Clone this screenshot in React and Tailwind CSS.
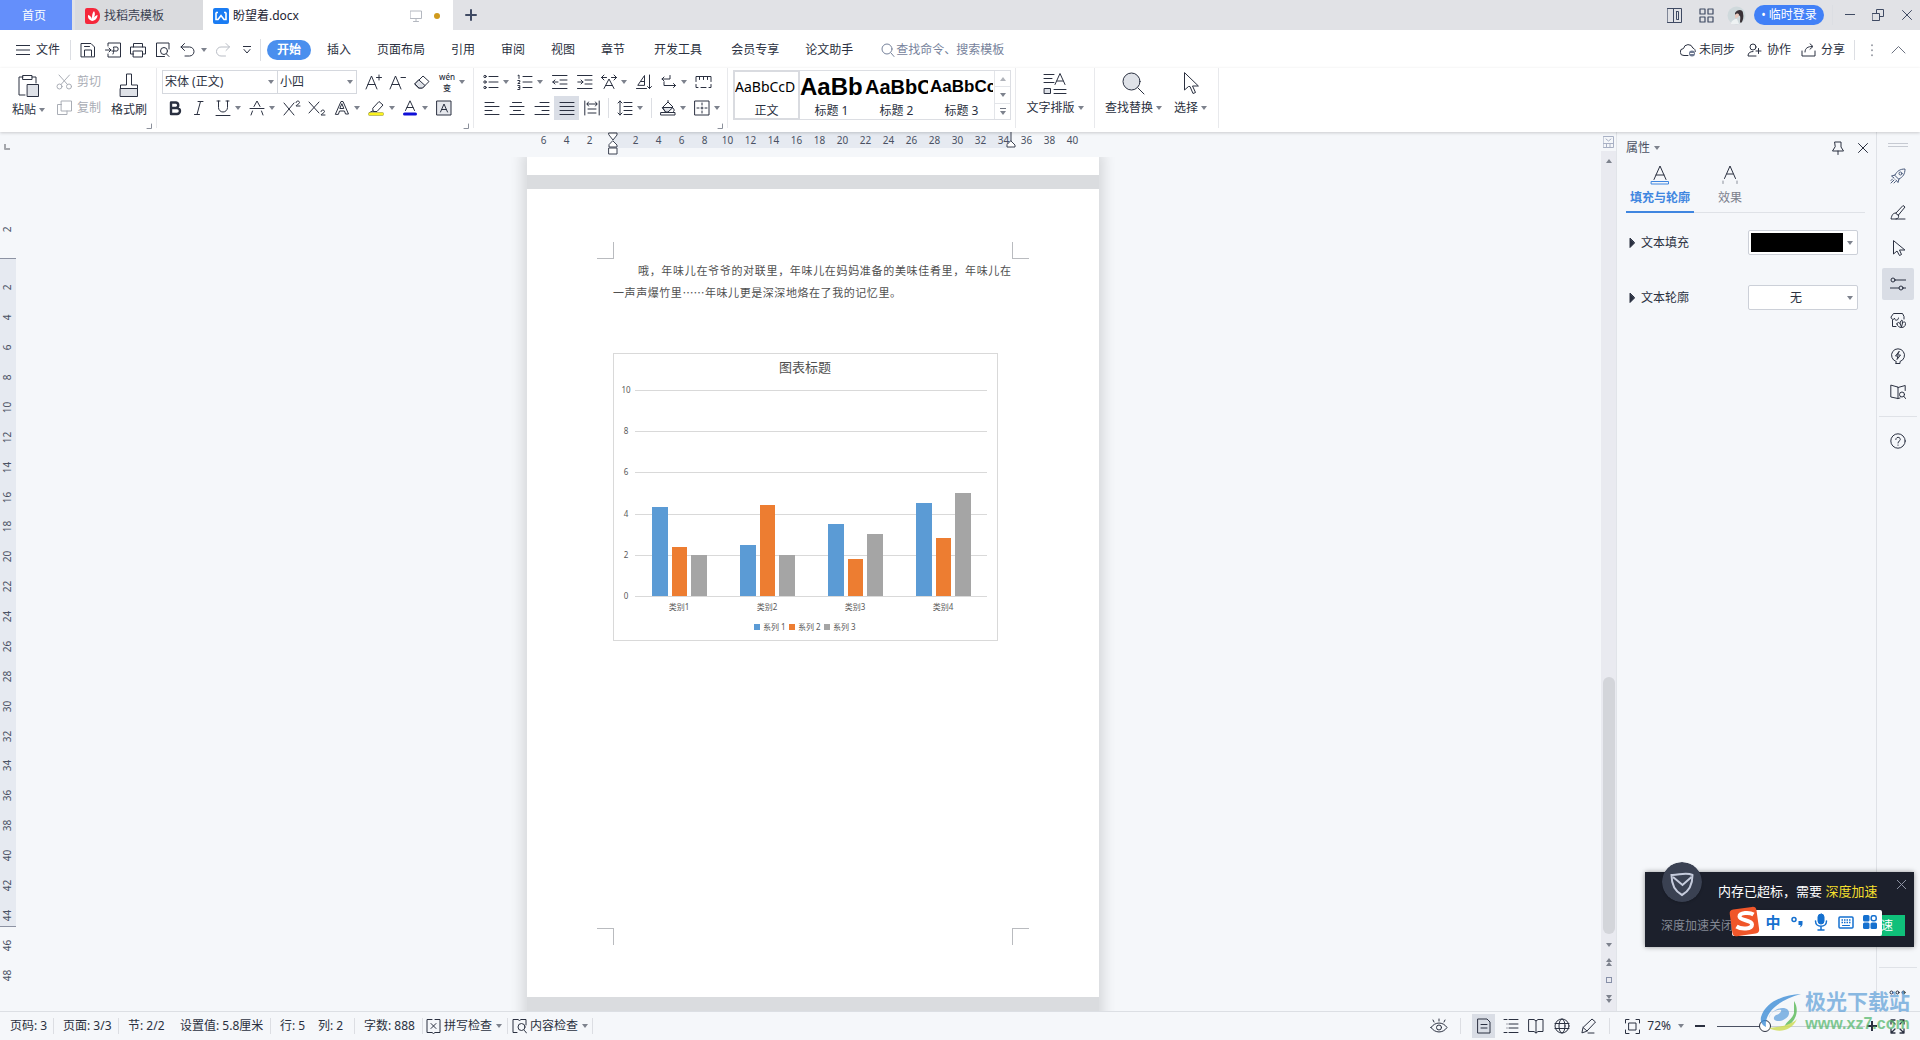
import React from "react";

const FONT = "font-['Noto_Sans','Noto_Sans_CJK_SC',sans-serif]";

function Ic({ children, w = 16, h = 16, className = "", sw = 1 }) {
  return (
    <svg width={w} height={h} viewBox={`0 0 ${w} ${h}`} fill="none" stroke="currentColor" strokeWidth={sw} strokeLinejoin="round" strokeLinecap="round" aria-hidden="true" className={`shrink-0 ${className}`}>
      {children}
    </svg>
  );
}

function Caret({ className = "" }) {
  return (
    <svg width="6" height="4" viewBox="0 0 6 4" aria-hidden="true" className={`shrink-0 text-[#7d828d] ${className}`}>
      <path d="M0 0h6L3 4z" fill="currentColor" />
    </svg>
  );
}

function Bar({ className = "" }) {
  return <span className={`w-px shrink-0 bg-[#dcdee3] ${className}`} />;
}

/* ---------- title bar ---------- */

function TitleBar() {
  return (
    <header className="flex h-[30px] shrink-0 bg-[#e1e2e6] text-xs">
      <button className="w-[72px] bg-[#648ffb] pt-px pr-1 text-white">首页</button>
      <button className="ml-[3px] flex w-32 items-center gap-1 bg-[#dadbde] pt-px pl-[10px] text-[#3b4252]">
        <svg width="15" height="16" viewBox="0 0 15 16" aria-hidden="true">
          <path d="M2 0h6c4 0 7 3.500 7 8s-3 8-7 8H2a2 2 0 0 1-2-2V2a2 2 0 0 1 2-2z" fill="#f5273b" />
          <path d="M7 13C4 12 2.500 10 3 7c2 .5 3.500 2 4 4 0-3 0-6 2-8 1.500 2 1 5-.5 7 1-1.500 2-2.500 4-3 0 3-2 5.500-5.500 6z" fill="#fff" />
        </svg>
        <span>找稻壳模板</span>
      </button>
      <div className="flex w-[250px] items-center bg-white pt-px pr-[13px] pl-[10px] text-[#1d2433]">
        <svg width="16" height="16" viewBox="0 0 16 16" aria-hidden="true">
          <rect width="16" height="16" rx="2" fill="#1a7cf3" />
          <path d="M3 4.500v7h2L8 7.500l3 4h2v-7M3 4.500h2M11 4.500h2" fill="none" stroke="#fff" strokeWidth="1.600" />
        </svg>
        <span className="ml-1">盼望着.docx</span>
        <Ic w={12} h={12} className="ml-auto text-[#b4b8c0]">
          <path d="M.5 1h11v7.500H.5zM6 8.500v3M3.500 11.500h5" />
        </Ic>
        <span className="ml-[12px] size-[6px] rounded-full bg-[#d09a1c]" />
      </div>
      <button aria-label="新建标签" className="ml-3 text-[#3f4a63]">
        <Ic w={12} h={12} sw={2}><path d="M6 1v10M1 6h10" /></Ic>
      </button>
      <div className="ml-auto flex items-center pr-2 text-[#3f4a63]">
        <button aria-label="分屏">
          <Ic w={15} h={15}><path d="M.5.5h14v14H.5zM6.500.5v14M9.500 3.500v8h2M9.500 3.500h2v8" /></Ic>
        </button>
        <button aria-label="应用" className="ml-[17px]">
          <Ic w={15} h={15} sw={1.2}><path d="M1 1h5v5H1zM9 1h5v5H9zM1 9h5v5H1zM9 9h5v5H9z" /></Ic>
        </button>
        <svg width="19" height="19" viewBox="0 0 19 19" role="img" aria-label="头像" className="ml-[13px]">
          <circle cx="9.500" cy="9.500" r="9" fill="#cfd9dc" />
          <path d="M8 7c2-4 8-4 8 0 1 4 0 8-2 10-2-1 0-4-1-7-1-1-3 0-5 1z" fill="#3a3136" />
          <path d="M8 9c1-2 4-2 4 0s-3 4-4 3z" fill="#e8c9bd" />
          <path d="M4 18c0-3 3-5 6-5l2 5z" fill="#eef2f3" />
        </svg>
        <button className="ml-[8px] h-5 w-[70px] rounded-full bg-[#4180f7] text-xs leading-5 text-white">• 临时登录</button>
        <Bar className="ml-2 h-5 bg-[#c9ccd2]" />
        <button aria-label="最小化" className="ml-3"><Ic w={10} h={10}><path d="M0 4.500h10" /></Ic></button>
        <button aria-label="还原" className="ml-[17px]"><Ic w={12} h={12}><path d="M.5 4.500h7v7h-7zM4.500 4.500v-4h7v7h-4" /></Ic></button>
        <button aria-label="关闭" className="ml-[18px]"><Ic w={10} h={10}><path d="M.5.5l9 9M9.500.5l-9 9" /></Ic></button>
      </div>
    </header>
  );
}

/* ---------- menu row ---------- */

const MENUS = ["插入", "页面布局", "引用", "审阅", "视图", "章节", "开发工具", "会员专享", "论文助手"];

function MenuRow() {
  return (
    <nav className="flex h-[38px] shrink-0 items-center bg-white pt-0.5 text-xs text-[#2a3040]">
      <button className="ml-4 flex items-center gap-[6px]">
        <Ic w={14} h={10}><path d="M0 .5h14M0 5h14M0 9.500h14" /></Ic>文件
      </button>
      <Bar className="ml-[10px] h-5" />
      <button aria-label="保存" className="ml-[9px]">
        <Ic><path d="M1 14.500V1.500h10l3.500 3.500v9.500zM4.500 14V8h7v6M4.500 4.500h5" /></Ic>
      </button>
      <button aria-label="输出为PDF" className="ml-[9px]">
        <Ic><path d="M3 4V1h12.500v14H3v-3M.5 8H6M4 6l2 2-2 2M8 12c1-2 1-5 .5-7h3.500c1.500 0 1.500 4 0 4H7" /></Ic>
      </button>
      <button aria-label="打印" className="ml-[9px]">
        <Ic><path d="M3.500 5V1.500h9V5M3.500 12H.5V5h15v7h-3M3.500 9h9v6h-9z" /></Ic>
      </button>
      <button aria-label="打印预览" className="ml-[9px]">
        <Ic><path d="M4 14.500H1.500V1H14v6M14 14.500l-2.500-2.500M1.500 14.500h8" /><circle cx="9" cy="9" r="3.500" /></Ic>
      </button>
      <button aria-label="撤销" className="ml-[9px] flex items-center gap-[6px]">
        <Ic w={15}><path d="M4.500 1.500L1 5l3.500 3.500M1 5h8.500a4.500 4.500 0 0 1 0 9H5" /></Ic><Caret />
      </button>
      <button aria-label="恢复" className="ml-[8px] text-[#b9bdc5]">
        <Ic><path d="M11 1.500L14.500 5 11 8.500M14.500 5H6a4.500 4.500 0 0 0 0 9h4.500" /></Ic>
      </button>
      <button aria-label="自定义" className="ml-[12px]">
        <Ic w={8} h={8}><path d="M0 .5h8M1 3.500L4 7l3-3.500" /></Ic>
      </button>
      <Bar className="ml-[9px] h-[22px]" />
      <button className="ml-[6px] h-5 w-11 rounded-full bg-[#4a8fee] font-bold leading-5 text-white">开始</button>
      <div className="ml-[3px] flex">
        {MENUS.map((m) => (
          <button key={m} className={m === "开发工具" ? "px-4" : "px-[13px]"}>{m}</button>
        ))}
      </div>
      <label className="ml-[15px] flex items-center gap-px text-[#76829b]">
        <Ic w={14} h={14}><circle cx="6" cy="6" r="5" /><path d="M10 10l3 3.500" /></Ic>
        <input aria-label="搜索" placeholder="查找命令、搜索模板" className="w-32 bg-transparent outline-none placeholder:text-[#76829b]" />
      </label>
      <div className="ml-auto flex items-center pr-[14px]">
        <button className="flex items-center gap-[3px]">
          <Ic w={16} h={14}><path d="M8 12.500H4a3.500 3.500 0 0 1-.5-7 4.800 4.800 0 0 1 9.300-.5c2 .8 2.500 2 2.500 3.500" /><circle cx="12" cy="10.500" r="3" fill="#6f7a92" stroke="none" /><path d="M10.500 10.500h3" stroke="#fff" /></Ic>
          未同步
        </button>
        <button className="ml-3 flex items-center gap-[5px]">
          <Ic w={15} h={14}><circle cx="6" cy="4" r="3" /><path d="M9 13H1c0-3 2-4.500 5-4.500M11.500 5.500v5M9 8h5" /></Ic>
          协作
        </button>
        <button className="ml-[10px] flex items-center gap-[5px]">
          <Ic w={15} h={14}><path d="M1 8v5h13V8M4 9c0-4 3-5.500 7-5.500M9 .8l3 2.700-3 2.700" /></Ic>
          分享
        </button>
        <Bar className="ml-[9px] h-5" />
        <button aria-label="更多" className="ml-[15px] text-[#7d828d]"><Ic w={4} h={14}><path d="M2 2v.5M2 7v.5M2 12v.5" strokeWidth="1.500" /></Ic></button>
        <button aria-label="收起功能区" className="ml-[17px] text-[#6b7180]"><Ic w={15} h={10}><path d="M1 8l6.500-6.500L14 8" /></Ic></button>
      </div>
    </nav>
  );
}

/* ---------- ribbon ---------- */

function Cell({ label, className = "w-6", children }) {
  return (
    <button aria-label={label} className={`flex h-6 shrink-0 items-center justify-center ${className}`}>{children}</button>
  );
}

function Split({ label, children }) {
  return (
    <button aria-label={label} className="flex h-6 w-[34px] shrink-0 items-center gap-1 px-1">
      {children}
      <Caret />
    </button>
  );
}

function Group({ corner, className = "", children }) {
  return (
    <div className={`flex flex-col gap-0.5 pt-0.5 ${className}`}>
      {children}
      {corner && (
        <button aria-label="更多设置" className="mt-px mr-[4px] self-end text-[#8b909b]">
          <Ic w={6} h={6}><path d="M5.500 1v4.500H1" /></Ic>
        </button>
      )}
    </div>
  );
}

function Sep() {
  return <Bar className="h-[60px] bg-[#e8e9ec]" />;
}

const lines = (a) => a.map(([x1, y, x2]) => `M${x1} ${y}H${x2}`).join("");

function Combo({ label, value, className }) {
  return (
    <span className={`relative flex h-6 items-center ${className}`}>
      <select aria-label={label} className="h-full w-full appearance-none bg-transparent pl-[2px] text-xs outline-none">
        <option>{value}</option>
      </select>
      <Caret className="pointer-events-none absolute right-[3px]" />
    </span>
  );
}

function BigButton({ label, caret = true, icon, className = "" }) {
  return (
    <button className={`flex flex-col items-center gap-[3px] pt-[3px] ${className}`}>
      <span className="flex h-[25px] items-center">{icon}</span>
      <span className="flex items-center gap-[3px] leading-[18px]">{label}{caret && <Caret />}</span>
    </button>
  );
}

const STYLES = [
  { name: "正文", cls: "text-sm", sample: "AaBbCcD" },
  { name: "标题 1", cls: "text-2xl font-bold font-['Liberation_Sans',sans-serif]", sample: "AaBb" },
  { name: "标题 2", cls: "text-xl font-bold font-['Liberation_Sans',sans-serif]", sample: "AaBbC" },
  { name: "标题 3", cls: "text-[17px] font-bold font-['Liberation_Sans',sans-serif]", sample: "AaBbCc" },
];

function Ribbon() {
  return (
    <div className="z-10 flex h-16 shrink-0 bg-white text-xs text-[#2a3040] shadow-[0_1px_3px_rgba(0,0,0,0.18)]">
      <Group corner className="w-[156px]">
        <div className="flex h-[50px]">
          <BigButton label="粘贴" className="ml-[12px] w-[33px]" icon={
            <Ic w={22} h={24}><path d="M5 3H1v18h6M14 3h4v6" /><path d="M5 1.500h9v4H5z" /><path d="M9.500 10.500h11v12h-11z" fill="#dfe2e8" /></Ic>
          } />
          <div className="ml-[11px] text-[#a9adb5]">
            <button className="flex h-6 items-center gap-1"><Ic w={17}><circle cx="3.500" cy="12.500" r="2.500" /><circle cx="13" cy="12.500" r="2.500" /><path d="M5 10.500L13.500 1M11.500 10.500L3 1" /></Ic>剪切</button>
            <button className="mt-0.5 flex h-6 items-center gap-1"><Ic w={17}><path d="M5.500 1h10v10h-10z" /><path d="M5.500 4.500H1.500v10h9.500V11" /></Ic>复制</button>
          </div>
          <BigButton label="格式刷" caret={false} className="ml-[10px]" icon={
            <Ic w={20} h={25}><path d="M1.500 15.500h17v8h-17z" fill="#dfe2e8" /><path d="M1.500 15.500V12H7.500V1h5v11h6v3.500" /></Ic>
          } />
        </div>
      </Group>
      <Sep />
      <Group corner className="w-[316px] pl-[5px]">
        <div className="flex">
          <div className="flex w-[195px] border border-[#d5d8de]">
            <Combo label="字体" value="宋体 (正文)" className="-my-px w-[115px] border-r border-[#d5d8de]" />
            <Combo label="字号" value="小四" className="-my-px flex-1" />
          </div>
          <div className="ml-1 flex">
            <Cell label="增大字号"><Ic w={17}><path d="M1 15L6.500 2 12 15M3 10.500h7M14 1v5M11.500 3.500h5" /></Ic></Cell>
            <Cell label="减小字号"><Ic w={17}><path d="M1 15L6.500 2 12 15M3 10.500h7M12 3.500h4.500" /></Ic></Cell>
            <Cell label="清除格式" className="w-[26px]"><Ic><path d="M1 10l8-8 6 5.500-6.500 6.500H5z" /><path d="M5 6l6 5.500-2.500 2.500H5L1 10z" fill="#dfe2e8" /></Ic></Cell>
            <Split label="拼音指南">
              <span className="flex w-4 flex-col items-center text-[8px] font-medium leading-[11px]"><span>wén</span><span>变</span></span>
            </Split>
          </div>
        </div>
        <div className="flex">
          <Cell label="加粗" className="w-[25px]"><Ic sw={2.4}><path d="M4 2.500h5a2.800 2.800 0 0 1 0 5.500H4zM4 8h6a2.900 2.900 0 0 1 0 6H4z" /></Ic></Cell>
          <Cell label="倾斜"><Ic><path d="M7 1.500h5M3.500 14.500h5M9.500 1.500l-3.500 13" /></Ic></Cell>
          <Split label="下划线"><Ic><path d="M3.500 1v6.500a4.500 4.500 0 0 0 9 0V1M1 15.500h14M2 1h3M11 1h3" /></Ic></Split>
          <Split label="删除线"><Ic><path d="M1 8.500h14M5 6.500L8 1l3 5.500M3.500 11L2 15M12.500 11l1.500 4" /></Ic></Split>
          <Cell label="上标" className="w-[25px]"><Ic w={18}><path d="M1 3l10 12M11 3L1 15M13 2.500c0-2 3.500-2 3.500 0C16.500 4 13 5 13 6h4" /></Ic></Cell>
          <Cell label="下标" className="w-[26px]"><Ic w={18}><path d="M1 2l10 11M11 2L1 13M13 11.500c0-2 3.500-2 3.500 0 0 1.500-3.500 2.500-3.500 3.500h4" /></Ic></Cell>
          <Split label="文字效果"><Ic><path d="M1.500 14L7 1.500h2L14.500 14h-3l-1-3h-5l-1 3zM6.200 8.500h3.600L8 4z" /></Ic></Split>
          <Split label="突出显示"><Ic w={17}><path d="M5 8l6-6.500 4 3.500-6 6.500H5.500zM5 11L2.500 12" /><rect x=".5" y="12.500" width="15" height="3" rx="1" fill="#fbf21d" stroke="#8a8a3a" strokeWidth=".5" /></Ic></Split>
          <Split label="字体颜色"><Ic><path d="M3.500 10.500L8 .8l4.500 9.700M5 7.500h6" /><rect x="1" y="12.500" width="14" height="3" rx="1.500" fill="#1010d8" stroke="none" /></Ic></Split>
          <Cell label="字符底纹"><Ic><path d="M1 1h14v14H1z" fill="#e6e8ed" /><path d="M4.500 12L8 4l3.500 8M5.500 9.500h5" /></Ic></Cell>
        </div>
      </Group>
      <Sep />
      <Group corner className="w-[253px] pl-[5px]">
        <div className="flex">
          <Split label="项目符号"><Ic><path d={lines([[6, 2.5, 15], [6, 8, 15], [6, 13.5, 15]])} /><circle cx="2" cy="2.500" r="1.200" /><circle cx="2" cy="8" r="1.200" /><circle cx="2" cy="13.500" r="1.200" /></Ic></Split>
          <Split label="编号"><Ic><path d={lines([[6, 2.5, 15], [6, 8, 15], [6, 13.5, 15]])} /><path d="M1 1.500l1-.5v3.500M.8 6.500h2v1.500l-2 1.500h2M.8 11.500h2v4h-2M1.500 13.500h1" /></Ic></Split>
          <Cell label="减少缩进" className="w-[25px]"><Ic><path d={lines([[0.5, 1.5, 15], [8, 6, 15], [8, 10, 15], [0.5, 14.5, 15]])} /><path d="M6 8H.8M3 6L.8 8 3 10" /></Ic></Cell>
          <Cell label="增加缩进" className="w-[25px]"><Ic><path d={lines([[0.5, 1.5, 15], [8, 6, 15], [8, 10, 15], [0.5, 14.5, 15]])} /><path d="M.8 8H6M4 6l2 2-2 2" /></Ic></Cell>
          <Split label="中文版式"><Ic><path d="M3 14.500L8 5l5 9.500M4.500 11.500h7M.5 3.500h5M3 1L.5 3.500 3 6M15.500 3.500h-5M13 1l2.500 2.500L13 6" /></Ic></Split>
          <Cell label="排序" className="w-[26px]"><Ic><path d="M.5 14.500h10M2 11L8.500 1.500V11zM5 7.500h3.500M13.500 1v13.500M11.500 12.500l2 2 2-2" /></Ic></Cell>
          <Split label="换行"><Ic><path d="M1 5h8V1.500M3 3L1 5l2 2M3 8v3.500h11.500M12.500 9.500l2 2-2 2" /></Ic></Split>
          <Cell label="制表位"><Ic w={17}><path d="M1 7.500v-5h15v5M4.500 2.500v3M8.500 2.500v3M12.500 2.500v3M1 10.500v3h2M6 13.500h5M14 13.500h2v-3" /></Ic></Cell>
        </div>
        <div className="flex items-center">
          <Cell label="左对齐" className="w-[25px]"><Ic><path d={lines([[1, 2.5, 10], [1, 6.5, 15], [1, 10.5, 8], [1, 14.5, 15]])} /></Ic></Cell>
          <Cell label="居中" className="w-[25px]"><Ic><path d={lines([[3.5, 2.5, 12.5], [1, 6.5, 15], [4.5, 10.5, 11.5], [1, 14.5, 15]])} /></Ic></Cell>
          <Cell label="右对齐" className="w-[25px]"><Ic><path d={lines([[6, 2.5, 15], [1, 6.5, 15], [8, 10.5, 15], [1, 14.5, 15]])} /></Ic></Cell>
          <Cell label="两端对齐" className="w-[25px] bg-[#dadee6]"><Ic><path d={lines([[1, 2.5, 15], [1, 6.5, 15], [1, 10.5, 15], [1, 14.5, 15]])} /></Ic></Cell>
          <Cell label="分散对齐" className="w-[25px]"><Ic><path d="M.8 1v14M15.200 1v14M3 4h10M4.500 2L3 4l1.500 2M11.500 2L13 4l-1.500 2M4 9h8M4 13h8" /></Ic></Cell>
          <Bar className="mx-1 h-5" />
          <Split label="行距"><Ic><path d={lines([[7, 2.5, 15], [7, 6.5, 15], [7, 10.5, 15], [7, 14.5, 15]])} /><path d="M3 1v14M1 3l2-2 2 2M1 13l2 2 2-2" /></Ic></Split>
          <Bar className="mx-1 h-5" />
          <Split label="底纹颜色"><Ic><path d="M2.500 7.500L8 2l5 5-5 5H6z" /><path d="M3 7.500h10l-5 4.500H6zM8 2V.5M13.500 8.500c1 1.500 1 2.500 0 3" fill="#dfe2e8" /><path d="M1 12.500h14v2.500H1z" fill="#fff" /></Ic></Split>
          <Split label="边框"><Ic><path d="M1 1h14v14H1z" /><path d="M8 3v10M3 8h10" strokeDasharray="2 2" /></Ic></Split>
        </div>
      </Group>
      <Sep />
      <div className="mt-[2px] ml-[5px] flex h-[50px] w-[278px] border border-[#dcdee3]">
        {STYLES.map((s, i) => (
          <button key={s.name} className={`flex w-[65px] shrink-0 flex-col items-center ${i === 0 ? "outline-2 -outline-offset-1 outline-[#d9dbe0]" : ""}`}>
            <span className={`flex h-8 w-[63px] items-center overflow-hidden whitespace-nowrap text-black ${s.cls}`}>{s.sample}</span>
            <span className="leading-4">{s.name}</span>
          </button>
        ))}
        <span className="flex flex-1 flex-col divide-y divide-[#e3e5e9] border-l border-[#e3e5e9]">
          <button aria-label="上一行" className="flex flex-1 items-center justify-center"><Caret className="rotate-180 opacity-60" /></button>
          <button aria-label="下一行" className="flex flex-1 items-center justify-center"><Caret /></button>
          <button aria-label="更多样式" className="flex flex-1 flex-col items-center justify-center gap-0.5"><span className="h-px w-[6px] bg-[#6f7480]" /><Caret /></button>
        </span>
      </div>
      <Bar className="ml-[4px] h-[60px] bg-[#e8e9ec]" />
      <BigButton label="文字排版" className="w-[78px]" icon={
        <Ic w={24} h={22}><path d="M1 1.500h10M1 5.500h8M1 9.500h10M12 11.500L17 .5l5 11M14 8h6M11 16.500h12M11 20.500h12" /><path d="M1.500 15.500h6v5h-6z" fill="#dfe2e8" /></Ic>
      } />
      <Sep />
      <BigButton label="查找替换" className="ml-[10px]" icon={
        <Ic w={23} h={23}><circle cx="9.500" cy="9.500" r="8.500" fill="#dfe2e8" /><path d="M16 16l6 6" /></Ic>
      } />
      <BigButton label="选择" className="ml-3 mr-[11px]" icon={
        <Ic w={17} h={23}><path d="M2.500 1v17l4-3.500h1.500l3 7 2.500-1-3-6.500h5.500z" /></Ic>
      } />
      <Sep />
    </div>
  );
}

/* ---------- rulers ---------- */

const H_MARKS = [6, 4, 2, "", 2, 4, 6, 8, 10, 12, 14, 16, 18, 20, 22, 24, 26, 28, 30, 32, 34, 36, 38, 40];
const V_MARKS = Array.from({ length: 24 }, (_, i) => (i + 1) * 2);

function VRuler() {
  return (
    <div className="relative flex w-4 shrink-0 flex-col items-center text-[10px] leading-[15px] text-[#4a5163]">
      <div className="absolute top-[126px] left-0 h-[669px] w-4 border-y border-[#8d93a3] bg-[#e6eaf1]" />
      <Ic w={6} h={6} sw={2} className="absolute top-[12px] left-1 text-[#a4a6ab]"><path d="M1 0v5h5" /></Ic>
      <div className="relative mt-[90px] -rotate-90">2</div>
      <div className="relative mt-[36px] flex h-[717px] flex-col">
        {V_MARKS.map((n) => (
          <div key={n} className="flex flex-1 items-center justify-center"><span className="-rotate-90">{n}</span></div>
        ))}
      </div>
    </div>
  );
}

function HRuler() {
  return (
    <div className="flex h-[25px] shrink-0 justify-center pl-[9px]">
      <div className="relative w-[572px] shrink-0 pl-[5px] text-[10px] leading-4 text-[#4a5163]">
        <div className="absolute top-0 left-[86px] h-4 w-[398px] bg-[#e6eaf1]" />
        <div className="relative flex">
          {H_MARKS.map((n, i) => <span key={i} className="w-[23px] shrink-0 text-center">{n}</span>)}
        </div>
        <Ic w={10} h={23} className="absolute top-0 left-[81px] text-[#3d4352]">
          <path d="M1 1h8v2L5 8 1 3zM5 9l4 4v2H1v-2zM1 16h8v6H1z" fill="#fff" />
        </Ic>
        <Ic w={10} h={16} className="absolute top-0 left-[479px] text-[#3d4352]">
          <path d="M5 0v9" /><path d="M5 9l4 4v2H1v-2z" fill="#fff" />
        </Ic>
      </div>
    </div>
  );
}

/* ---------- document ---------- */

const SERIES = [
  { name: "系列 1", color: "#5b9bd5", values: [4.3, 2.5, 3.5, 4.5] },
  { name: "系列 2", color: "#ed7d31", values: [2.4, 4.4, 1.8, 2.8] },
  { name: "系列 3", color: "#a5a5a5", values: [2, 2, 3, 5] },
];

function Chart() {
  const y = (v) => Math.round(243 - v * 20.6);
  return (
    <svg width="385" height="288" viewBox="0 0 385 288" role="img" aria-label="图表标题" className={`mt-[50px] block ${FONT}`}>
      <rect x=".5" y=".5" width="384" height="287" fill="#fff" stroke="#d9d9d9" />
      <text x="192" y="19" fontSize="13" textAnchor="middle" fill="#505050">图表标题</text>
      {[0, 2, 4, 6, 8, 10].map((v) => (
        <g key={v}>
          <path d={`M22 ${y(v) + 0.5}H374`} stroke="#d9d9d9" />
          <text x="13" y={y(v) + 3} fontSize="8" textAnchor="middle" fill="#595959">{v}</text>
        </g>
      ))}
      {SERIES.map((s, si) =>
        s.values.map((v, i) => (
          <rect key={`${si}-${i}`} x={39 + i * 88 + si * 20 - (si === 2 ? 1 : 0)} y={y(v)} width={si === 1 ? 15 : 16} height={243 - y(v)} fill={s.color} />
        ))
      )}
      {[1, 2, 3, 4].map((n) => (
        <text key={n} x={66 + (n - 1) * 88} y="257" fontSize="8" textAnchor="middle" fill="#595959">类别{n}</text>
      ))}
      {SERIES.map((s, i) => (
        <g key={s.name}>
          <rect x={141 + i * 35} y="271" width="6" height="6" fill={s.color} />
          <text x={150 + i * 35} y="277" fontSize="8" fill="#595959">{s.name}</text>
        </g>
      ))}
    </svg>
  );
}

function Pages() {
  return (
    <div className="flex min-h-0 flex-1 justify-center overflow-hidden pl-[9px]">
      <div className="flex w-[572px] shrink-0 flex-col self-start bg-[#dadcdf] shadow-[0_0_12px_5px_rgba(0,0,0,0.12)]">
        <div className="h-[18px] bg-white" />
        <article className="mt-[14px] mb-[30px] flex h-[808px] flex-col bg-white pt-[53px] pb-[52px]">
          <div className="flex justify-between px-[70px]">
            <span className="size-[17px] border-r border-b border-[#b9bbbf]" />
            <span className="size-[17px] border-b border-l border-[#b9bbbf]" />
          </div>
          <div className="px-[86px]">
            <p lang="zh-CN" className="w-[398px] font-['Noto_Sans_CJK_SC',sans-serif] text-[11px] leading-[22px] text-[#505050] [text-align-last:justify]">
              <span className="block whitespace-nowrap pl-[25px]">哦，年味儿在爷爷的对联里，年味儿在妈妈准备的美味佳肴里，年味儿在</span>
              <span className="block w-[288px] whitespace-nowrap">一声声爆竹里……年味儿更是深深地烙在了我的记忆里。</span>
            </p>
            <Chart />
          </div>
          <div className="mt-auto flex justify-between px-[70px]">
            <span className="size-[17px] border-t border-r border-[#b9bbbf]" />
            <span className="size-[17px] border-t border-l border-[#b9bbbf]" />
          </div>
        </article>
      </div>
    </div>
  );
}

function ScrollBar() {
  return (
    <div className="flex w-[15px] shrink-0 flex-col items-center text-[#8790a8]">
      <button aria-label="标尺" className="mt-1 text-[#a8b0c4]">
        <Ic w={11} h={12}><path d="M.5.5h10v11H.5zM.5 7.500h10M3.500 8v3M7 8v3M3 3l2.500 2L8 3" /></Ic>
      </button>
      <div className="mt-[3px] flex w-full flex-1 flex-col items-center bg-[#e9eaf0]">
        <Caret className="mt-2 rotate-180" />
        <div className="mt-auto h-[257px] w-[12px] rounded-full bg-[#d3d5da]" />
        <button aria-label="向下" className="mt-[9px]"><Caret className="block" /></button>
        <button aria-label="上一页" className="mt-[11px]"><Caret className="block rotate-180" /><Caret className="block rotate-180" /></button>
        <button aria-label="选择浏览对象" className="mt-[11px] size-[6px] border border-[#8790a8]" />
        <button aria-label="下一页" className="mt-[12px] mb-[8px]"><Caret className="block" /><Caret className="block" /></button>
      </div>
    </div>
  );
}

/* ---------- properties panel ---------- */

function Panel() {
  return (
    <aside className="flex w-[260px] shrink-0 flex-col border-l border-[#e1e4e9] pr-[8px] pl-[9px] text-xs text-[#2a3040]">
      <div className="mt-[7px] flex h-[18px] items-center">
        <button className="flex items-center gap-1 text-[#4a5163]">属性<Caret /></button>
        <button aria-label="固定" className="mr-[13px] ml-auto"><Ic w={14} h={14}><path d="M4 1h6v5l2.500 4h-11L4 6zM7 10v3.500" /></Ic></button>
        <button aria-label="关闭面板"><Ic w={10} h={10}><path d="M.5.5l9 9M9.500.5l-9 9" /></Ic></button>
      </div>
      <div className="mt-[8px] mr-[3px] flex border-b border-[#dfe2e7]">
        <button className="-mb-px flex h-[48px] w-[68px] flex-col items-center gap-[4px] border-b-2 border-[#3f86e0] font-bold text-[#3f86e0]">
          <Ic w={20} h={20} className="text-[#2a3040]"><path d="M4 14.500L10 1l6 13.500M6 10h8" /><path d="M1.500 16.500h17v2.500h-17z" stroke="#3f86e0" /></Ic>
          <span className="leading-[18px] whitespace-nowrap">填充与轮廓</span>
        </button>
        <button className="ml-3 flex w-12 flex-col items-center gap-[4px] text-[#7b808c]">
          <Ic w={20} h={20} className="text-[#2a3040]"><path d="M4.500 13.500L10 1l5.500 12.500M7 9h6" /><path d="M3 16v2.500M17 16v2.500" stroke="#8b909b" /></Ic>
          <span className="leading-[18px]">效果</span>
        </button>
      </div>
      <div className="mt-[17px] flex items-center justify-between">
        <button className="flex items-center gap-[6px] pl-[3px]"><Ic w={6} h={10}><path d="M1 .5v9L5.500 5z" fill="currentColor" /></Ic>文本填充</button>
        <button aria-label="文本填充颜色" className="mr-[10px] flex h-[25px] w-[110px] items-center justify-between rounded-[2px] border border-[#ccd0d8] bg-white pr-1 pl-[2px]">
          <span className="h-[19px] w-[92px] bg-black" /><Caret />
        </button>
      </div>
      <div className="mt-[30px] flex items-center justify-between">
        <button className="flex items-center gap-[6px] pl-[3px]"><Ic w={6} h={10}><path d="M1 .5v9L5.500 5z" fill="currentColor" /></Ic>文本轮廓</button>
        <span className="relative mr-[10px] flex items-center">
          <select aria-label="文本轮廓样式" className="h-[25px] w-[110px] appearance-none rounded-[2px] border border-[#ccd0d8] bg-white pr-[14px] text-center text-xs outline-none [text-align-last:center]">
            <option>无</option>
          </select>
          <Caret className="pointer-events-none absolute right-[5px]" />
        </span>
      </div>
    </aside>
  );
}

const SIDE = [
  ["加速", <Ic key="a" className="text-[#4a5b7c]"><path d="M5 7c2-4 5-6 10-6 0 5-2 8-6 10zM5 7L1.500 8 4 10M9 11l-1 3.500L6 12M1 15l3-3M1 12.500l1.500-1.500M4 15l1.500-1.500" /><circle cx="10.500" cy="5.500" r="1.500" /></Ic>],
  ["画笔", <Ic key="b"><path d="M6 9L13 1.500l2 1.500-6.500 8zM6 9c-3 0-4 1.500-5 6h5c2.500-.5 3-2 2.500-4M6 15h9" /></Ic>],
  ["选择", <Ic key="c"><path d="M3.500 1v13l3.500-3 2.500 4.500 2-1-2-4.500h5z" /></Ic>],
  ["属性", <Ic key="d"><path d="M5 4h11M0 12h9M13 12h3" /><circle cx="3" cy="4" r="2" /><circle cx="11" cy="12" r="2" /></Ic>],
  ["素材", <Ic key="e"><path d="M6 14.500H2.500V8M14 7V4.500L12.500 1.500h-9L1 5c0 3 3.500 3 3.500 1 0 3 4 3 4 0" /><path d="M7 12c0-2 2-2 3-.5C10 9 12 8 12 8l.5 3c1-1.500 3-1.500 3 .5 0 3-2 4-4 4s-4-1-4.500-3.500zM11.500 15l-1.500-3.500M11.500 15l1-4" /></Ic>],
  ["智能", <Ic key="f"><path d="M6 13.500A6.500 6.500 0 1 1 10 13.500V15.500H6zM9 3.500L5.500 8h2.500L7 11.500 10.500 7H8z" /></Ic>],
  ["阅读", <Ic key="g"><path d="M8 3.500v11L.8 13V1.500zM8 3.500l7.200-2v5M8 14.500l2-.5" /><circle cx="12" cy="10.500" r="2.500" /><path d="M14 12.500l1.500 2" /></Ic>],
];

function SideBar() {
  return (
    <aside className="flex w-11 shrink-0 flex-col items-center border-l border-[#dfe2e7] pr-0.5 text-[#2a3040]">
      <span className="mt-[11px] h-[4px] w-5 border-y border-[#c6cad2]" />
      <div className="mt-[13px] flex flex-col gap-1">
        {SIDE.map(([label, icon], i) => (
          <button key={label} aria-label={label} className={`flex size-8 items-center justify-center rounded-[2px] ${i === 3 ? "bg-[#d9dde5]" : ""}`}>{icon}</button>
        ))}
      </div>
      <span className="mt-[8px] h-px w-[38px] bg-[#dfe2e7]" />
      <button aria-label="帮助" className="mt-4"><Ic><circle cx="8" cy="8" r="7.200" /><path d="M5.800 6.500c0-3 4.500-3 4.500 0C10.300 8 8 8 8 10M8 12v.3" /></Ic></button>
      <span className="mt-auto h-px w-[38px] bg-[#dfe2e7]" />
      <button aria-label="更多" className="mt-[22px] mb-[16px]"><Ic w={17} h={5}><circle cx="2.500" cy="2.500" r="1.500" /><circle cx="8.500" cy="2.500" r="1.500" /><circle cx="14.500" cy="2.500" r="1.500" fill="currentColor" /></Ic></button>
    </aside>
  );
}

/* ---------- status bar ---------- */

function StatusBar() {
  return (
    <footer className="flex h-[29px] shrink-0 items-center border-t border-[#dcdfe4] bg-[#f5f7fa] text-xs whitespace-nowrap text-[#2a3040]">
      <span className="w-[53px] pl-[10px]">页码: 3</span><Bar className="h-4" />
      <span className="w-[64px] pl-[9px]">页面: 3/3</span><Bar className="h-4" />
      <span className="w-[61px] pl-[9px]">节: 2/2</span>
      <span className="w-[90px]">设置值: 5.8厘米</span><Bar className="h-4" />
      <span className="w-[47px] pl-[9px]">行: 5</span>
      <span className="w-[36px]">列: 2</span><Bar className="h-4" />
      <span className="w-[67px] pl-[9px]">字数: 888</span><Bar className="h-4" />
      <button className="flex w-[84px] items-center gap-[3px] pl-[3px]">
        <Ic w={15}><path d="M6 1.500H1v13h5l1.500 1 1.500-1h5v-13H9M5 5.500l5 5M10 5.500l-5 5" /></Ic>拼写检查<Caret className="ml-px" />
      </button>
      <Bar className="h-4" />
      <button className="flex w-[84px] items-center gap-[3px] pl-[4px]">
        <Ic w={15}><path d="M5 14.500H1v-13h5l1.500 1 1.500-1h5V7M12.500 12.500l2 2.500" /><circle cx="9.500" cy="9" r="3.500" /></Ic>内容检查<Caret className="ml-px" />
      </button>
      <Bar className="h-4" />
      <div className="ml-auto flex items-center pr-[15px]">
        <button aria-label="护眼模式"><Ic w={18}><path d="M1 9.500c4-6 12-6 16 0-4 6-12 6-16 0zM9 3V1M4 4L3 2M14 4l1-2" /><circle cx="9" cy="9.500" r="2.500" /></Ic></button>
        <Bar className="ml-3 h-4" />
        <button aria-label="页面视图" className="ml-[11px] flex h-6 w-[23px] items-center justify-center bg-[#d9dde5]"><Ic w={14}><path d="M1 1h9l3 3v11H1zM4 6.500h6M4 10h6" /></Ic></button>
        <button aria-label="大纲" className="ml-2"><Ic><path d="M1 1.500h3M6 1.500h9M4 6h0M6 6h9M4 10h0M6 10h9M1 14.500h3M6 14.500h9" /></Ic></button>
        <button aria-label="阅读版式" className="ml-[9px]"><Ic><path d="M8 3v12M1 1.500h5L8 3l2-1.500h5v12h-5L8 15l-2-1.500H1z" /></Ic></button>
        <button aria-label="Web版式" className="ml-[10px]"><Ic><circle cx="8" cy="8" r="7" /><ellipse cx="8" cy="8" rx="3" ry="7" /><path d="M1 5.500h14M1 10.500h14" /></Ic></button>
        <button aria-label="写作模式" className="ml-[11px]"><Ic><path d="M1 14.500l1-5L11 1l3.500 3L6 13zM2 9.500L6 13M7 15h6" /></Ic></button>
        <Bar className="ml-[12px] h-4" />
        <button aria-label="适合页面" className="ml-[15px]"><Ic w={15} h={15}><path d="M4 .5H.5V4M11 .5h3.500V4M4 14.500H.5V11M11 14.500h3.500V11M4 4h7v7H4z" /></Ic></button>
        <button className="ml-[7px] flex items-center gap-[7px]">72%<Caret /></button>
        <button aria-label="缩小" className="ml-[11px]"><Ic w={10} h={10} sw={2}><path d="M0 5h10" /></Ic></button>
        <input
          type="range" aria-label="缩放" min="0" max="100" defaultValue="31"
          className="ml-3 h-4 w-[148px] appearance-none bg-transparent [&::-webkit-slider-runnable-track]:h-px [&::-webkit-slider-runnable-track]:bg-linear-to-r [&::-webkit-slider-runnable-track]:from-[#4a5163] [&::-webkit-slider-runnable-track]:from-33% [&::-webkit-slider-runnable-track]:to-[#c9ced8] [&::-webkit-slider-runnable-track]:to-33% [&::-webkit-slider-thumb]:-mt-[6px] [&::-webkit-slider-thumb]:size-3 [&::-webkit-slider-thumb]:appearance-none [&::-webkit-slider-thumb]:rounded-full [&::-webkit-slider-thumb]:border [&::-webkit-slider-thumb]:border-[#2a3040] [&::-webkit-slider-thumb]:bg-white"
        />
        <button aria-label="放大" className="ml-[2px]"><Ic w={10} h={10} sw={2}><path d="M0 5h10M5 0v10" /></Ic></button>
        <button aria-label="全屏" className="ml-[13px]"><Ic w={15} h={15} sw={1.3}><path d="M1 5V1h4M14 5V1h-4M1 10v4h4M14 10v4h-4M1 1l4 4M14 1l-4 4M1 14l4-4M14 14l-4-4" /></Ic></button>
      </div>
    </footer>
  );
}

/* ---------- floating windows ---------- */

function MemoryToast() {
  return (
    <div role="alert" className="absolute right-[6px] bottom-[93px] z-20 h-[75px] w-[269px] bg-[#1c202c] shadow-[0_0_5px_rgba(0,0,0,0.4)]">
      <svg width="40" height="40" viewBox="0 0 40 40" aria-hidden="true" className="absolute -top-[10px] left-[17px] rounded-full shadow">
        <circle cx="20" cy="20" r="20" fill="#3a4152" />
        <path d="M9.500 13c7 .5 14-3.500 21 0 0 10-3 16-10.500 20-7.500-4-10.500-10-10.500-20z" fill="none" stroke="#c5cbdc" strokeWidth="2" />
        <path d="M11 15l9.500 8 9-8" fill="none" stroke="#c5cbdc" strokeWidth="2" />
      </svg>
      <p className="pt-[10px] pl-[73px] text-[13px] leading-[18px] text-white">内存已超标，需要 <span className="text-[#f4df2c]">深度加速</span></p>
      <button aria-label="关闭提示" className="absolute top-2 right-2 text-[#8d93a3]"><Ic w={9} h={9}><path d="M0 0l9 9M9 0L0 9" /></Ic></button>
      <div className="mt-[15px] flex h-[21px] items-center justify-between pr-[9px] pl-4 text-xs text-[#848995]">
        <span>深度加速关闭</span>
        <button className="h-full w-[72px] bg-[#0fc07a] pr-[12px] text-right text-white">加速</button>
      </div>
      <InputBar />
    </div>
  );
}

function InputBar() {
  return (
    <div className="absolute top-[38px] right-[32px] flex h-[26px] w-[150px] justify-end rounded-[2px] bg-white text-[#1570cf] shadow">
      <svg width="32" height="32" viewBox="0 0 32 32" aria-label="输入法" role="img" className="absolute -top-[4px] -left-[3px]">
        <rect x="2" y="2" width="27" height="27" rx="4" fill="#f0562a" transform="rotate(-8 16 16)" />
        <path d="M24.500 8.500c-4-2.500-14-2-14 2 0 4.500 12.500 3 12.500 8 0 5-11 5-15.500 2" fill="none" stroke="#fff" strokeWidth="4" />
      </svg>
      <Cell label="中文"><span className="text-[15px] font-bold leading-none">中</span></Cell>
      <Cell label="标点"><Ic w={12} h={14}><circle cx="3" cy="4.500" r="2" strokeWidth="1.500" /><path d="M7.500 6h4v3c0 2-1.500 3-3 3.500 1-1 1.200-1.700 1-2.500h-2z" fill="currentColor" stroke="none" /></Ic></Cell>
      <Cell label="语音"><Ic w={14} h={18}><rect x="4" y="1" width="6" height="10" rx="3" fill="currentColor" /><path d="M1.500 8c0 7 11 7 11 0M7 13.500V17M4 17h6" strokeWidth="1.500" /></Ic></Cell>
      <Cell label="键盘" className="w-[25px]"><Ic w={16} h={13}><rect x="1" y="1" width="14" height="11" rx="1" strokeWidth="1.500" /><path d="M3.500 4h9M3.500 6.500h9" strokeDasharray="1.500 1" strokeWidth="1.500" strokeLinecap="butt" /><path d="M4.500 9.500h7" /></Ic></Cell>
      <Cell label="工具箱"><Ic w={14} h={14}><rect x="0" y="0" width="6.500" height="6.500" rx="1.500" fill="currentColor" stroke="none" /><rect x="8.200" y=".7" width="5" height="5" rx="2" strokeWidth="1.500" /><rect x="0" y="7.500" width="6.500" height="6.500" rx="1.500" fill="currentColor" stroke="none" /><rect x="7.500" y="7.500" width="6.500" height="6.500" rx="1.500" fill="currentColor" stroke="none" /></Ic></Cell>
    </div>
  );
}

function Watermark() {
  return (
    <div className="pointer-events-none absolute right-[10px] bottom-[6px] z-30 flex items-center gap-px opacity-80">
      <svg width="44" height="42" viewBox="0 0 44 42" aria-hidden="true">
        <path d="M41 3C24 4 6 10 1 26c-1 5 1 8 5 10C4 22 18 9 41 3z" fill="#3f8fd8" />
        <path d="M9 27c2-8 14-13 19-8 4 5-4 12-11 11-4-1-4-4-1-6 3-1 6-3 5-5-5-1-12 4-12 8z" fill="#6ba6df" />
        <path d="M34 10c6 9 2 22-10 27 2-7 8-8 10-15z" fill="#58b957" />
        <path d="M9 37c9 5 22 4 28-9-5 5-14 8-28 9z" fill="#cddc4e" />
      </svg>
      <div className="flex flex-col items-center">
        <span className="text-[21px] font-bold leading-6 text-[#6fa9dc]">极光下载站</span>
        <span className="font-['Liberation_Sans',sans-serif] text-base font-bold leading-[21px] text-[#62bd78]">www.xz7.com</span>
      </div>
    </div>
  );
}

export default function App() {
  return (
    <div className={`relative flex h-screen flex-col overflow-hidden bg-[#f5f7fa] ${FONT}`}>
      <TitleBar />
      <MenuRow />
      <Ribbon />
      <div className="flex min-h-0 flex-1">
        <VRuler />
        <main className="flex min-w-0 flex-1 flex-col">
          <HRuler />
          <Pages />
        </main>
        <ScrollBar />
        <Panel />
        <SideBar />
      </div>
      <StatusBar />
      <MemoryToast />
      <Watermark />
    </div>
  );
}
